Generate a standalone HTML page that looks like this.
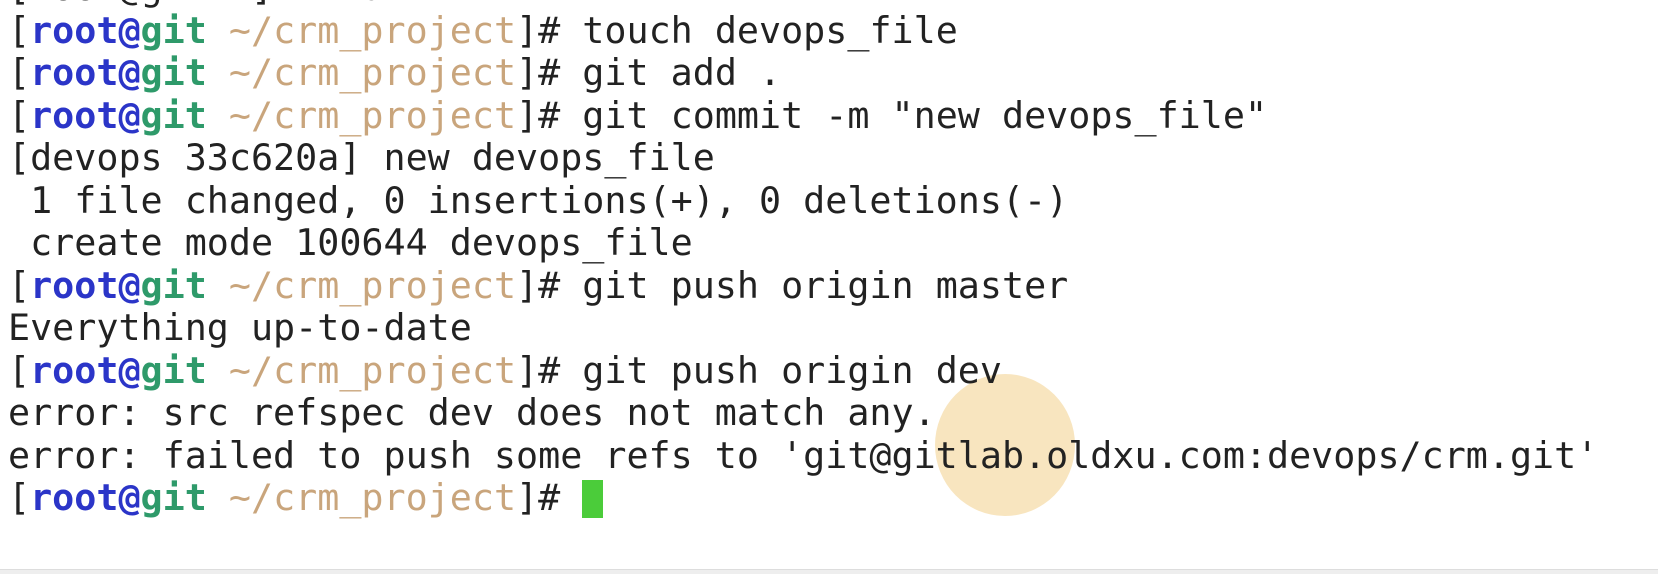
<!DOCTYPE html>
<html><head><meta charset="utf-8"><style>
html,body{margin:0;padding:0;background:#fff;width:1658px;height:574px;overflow:hidden;position:relative}
pre{position:absolute;left:8px;top:-33px;margin:0;font-family:"DejaVu Sans Mono","Liberation Mono",monospace;font-size:36.7px;line-height:42.5px;color:#222;white-space:pre}
.u{color:#2b35c8;font-weight:bold}.h{color:#2e9a6a;font-weight:bold}.p{color:#c9a57c}
.cur{display:inline-block;width:21px;height:38px;background:#4bcc3a;vertical-align:-8px}
.spot{position:absolute;left:935px;top:374px;width:140px;height:142px;border-radius:50%;background:rgba(246,220,170,0.75)}
.bar{position:absolute;left:0;top:569px;width:1658px;height:8px;background:#eeeeee;border-top:1px solid #ddd}
</style></head><body>
<div class="spot"></div>
<pre>[root@git ~]# mkdir ...
[<span class="u">root@</span><span class="h">git</span> <span class="p">~/crm_project</span>]# touch devops_file
[<span class="u">root@</span><span class="h">git</span> <span class="p">~/crm_project</span>]# git add .
[<span class="u">root@</span><span class="h">git</span> <span class="p">~/crm_project</span>]# git commit -m "new devops_file"
[devops 33c620a] new devops_file
 1 file changed, 0 insertions(+), 0 deletions(-)
 create mode 100644 devops_file
[<span class="u">root@</span><span class="h">git</span> <span class="p">~/crm_project</span>]# git push origin master
Everything up-to-date
[<span class="u">root@</span><span class="h">git</span> <span class="p">~/crm_project</span>]# git push origin dev
error: src refspec dev does not match any.
error: failed to push some refs to 'git@gitlab.oldxu.com:devops/crm.git'
[<span class="u">root@</span><span class="h">git</span> <span class="p">~/crm_project</span>]# <span class="cur"></span></pre>
<div class="bar"></div>
</body></html>
